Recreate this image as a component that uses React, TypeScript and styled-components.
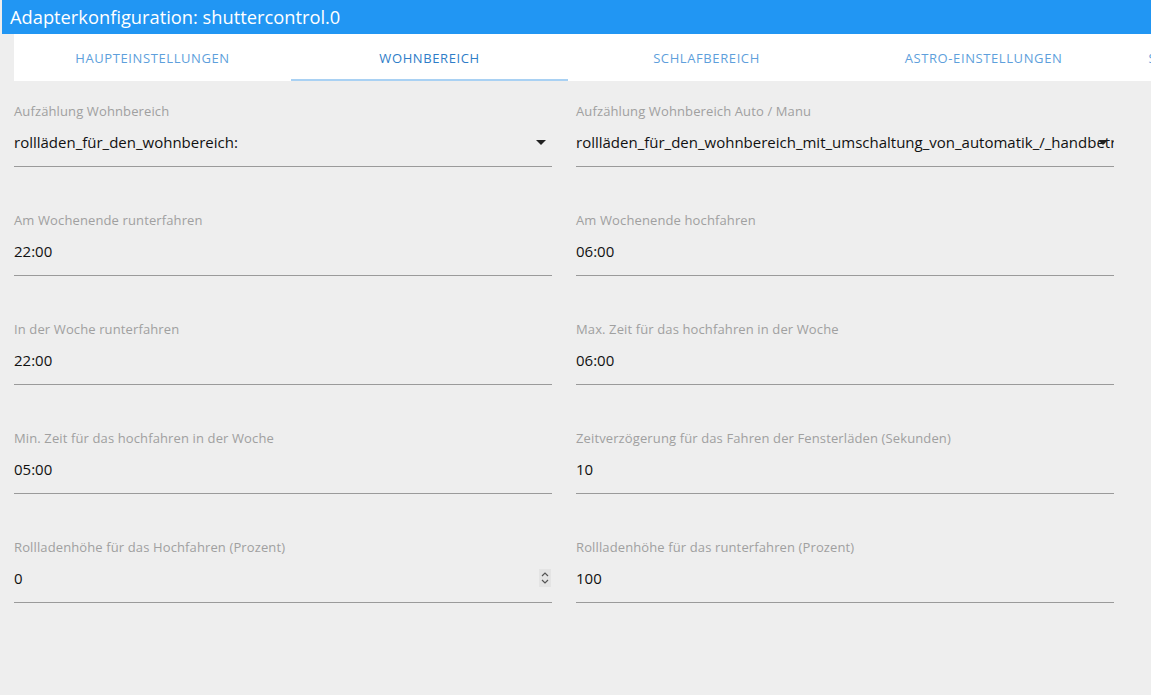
import React from "react";
import styled, { createGlobalStyle } from "styled-components";

const Global = createGlobalStyle`
  html, body { margin: 0; padding: 0; background: #eeeeee; }
  body { font-family: "Segoe UI", "Open Sans", "Noto Sans", sans-serif; overflow: hidden; }
  * { box-sizing: border-box; }
`;

const Page = styled.div`
  width: 1151px;
  height: 695px;
  background: #eeeeee;
  overflow: hidden;
`;

const TitleBar = styled.div`
  margin-left: 2px;
  height: 34px;
  background: #2196f3;
  color: #ffffff;
  font-size: 18.3px;
  line-height: 34px;
  padding-left: 8px;
  white-space: nowrap;
`;

const Tabs = styled.div`
  margin-left: 14px;
  height: 47px;
  background: #ffffff;
  display: flex;
  overflow: hidden;
`;

const Tab = styled.div<{ $active?: boolean }>`
  flex: 0 0 277px;
  display: flex;
  align-items: center;
  justify-content: center;
  font-size: 13px;
  letter-spacing: 0.6px;
  text-transform: uppercase;
  white-space: nowrap;
  color: ${(p) => (p.$active ? "#2e7dc8" : "#5e9fdc")};
  border-bottom: 2px solid ${(p) => (p.$active ? "#a9d1f3" : "transparent")};
  padding-top: 2px;
`;

const Form = styled.div`
  display: grid;
  grid-template-columns: 538px 538px;
  column-gap: 24px;
  row-gap: 27px;
  padding: 22px 0 0 14px;
`;

const Field = styled.div`
  display: flex;
  flex-direction: column;
  height: 82px;
`;

const Label = styled.div`
  font-size: 13px;
  letter-spacing: 0.12px;
  color: #a0a0a0;
  line-height: 16px;
  white-space: nowrap;
`;

const InputRow = styled.div`
  position: relative;
  margin-top: 13px;
  height: 35px;
  border-bottom: 1px solid #9a9a9a;
  display: flex;
  align-items: flex-start;
`;

const Value = styled.div`
  font-size: 15px;
  line-height: 20px;
  color: #111111;
  white-space: nowrap;
  overflow: hidden;
  flex: 1;
`;

const Arrow = styled.div`
  position: absolute;
  right: 6px;
  top: 8px;
  width: 0;
  height: 0;
  border-left: 5px solid transparent;
  border-right: 5px solid transparent;
  border-top: 5px solid #222;
`;

const Spinner = styled.div`
  position: absolute;
  right: 1px;
  top: 1px;
  width: 12px;
  height: 18px;
  background: #e4e4e4;
  display: flex;
  align-items: center;
  justify-content: center;
`;

type F = { label: string; value: string; kind?: "select" | "number" };

const fields: F[] = [
  { label: "Aufzählung Wohnbereich", value: "rollläden_für_den_wohnbereich:", kind: "select" },
  {
    label: "Aufzählung Wohnbereich Auto / Manu",
    value: "rollläden_für_den_wohnbereich_mit_umschaltung_von_automatik_/_handbetrieb",
    kind: "select",
  },
  { label: "Am Wochenende runterfahren", value: "22:00" },
  { label: "Am Wochenende hochfahren", value: "06:00" },
  { label: "In der Woche runterfahren", value: "22:00" },
  { label: "Max. Zeit für das hochfahren in der Woche", value: "06:00" },
  { label: "Min. Zeit für das hochfahren in der Woche", value: "05:00" },
  { label: "Zeitverzögerung für das Fahren der Fensterläden (Sekunden)", value: "10" },
  { label: "Rollladenhöhe für das Hochfahren (Prozent)", value: "0", kind: "number" },
  { label: "Rollladenhöhe für das runterfahren (Prozent)", value: "100" },
];

const tabs = ["Haupteinstellungen", "Wohnbereich", "Schlafbereich", "Astro-Einstellungen", "Sonnenschutz-Einstellungen"];

export default function App() {
  return (
    <Page>
      <Global />
      <TitleBar>Adapterkonfiguration: shuttercontrol.0</TitleBar>
      <Tabs>
        {tabs.map((t, i) => (
          <Tab key={t} $active={i === 1}>
            {t}
          </Tab>
        ))}
      </Tabs>
      <Form>
        {fields.map((f) => (
          <Field key={f.label}>
            <Label>{f.label}</Label>
            <InputRow>
              <Value>{f.value}</Value>
              {f.kind === "select" && <Arrow />}
              {f.kind === "number" && (
                <Spinner>
                  <svg width="10" height="16" viewBox="0 0 10 16" fill="none" stroke="#555" strokeWidth="1.2">
                    <path d="M2 6 L5 3 L8 6" />
                    <path d="M2 10 L5 13 L8 10" />
                  </svg>
                </Spinner>
              )}
            </InputRow>
          </Field>
        ))}
      </Form>
    </Page>
  );
}
